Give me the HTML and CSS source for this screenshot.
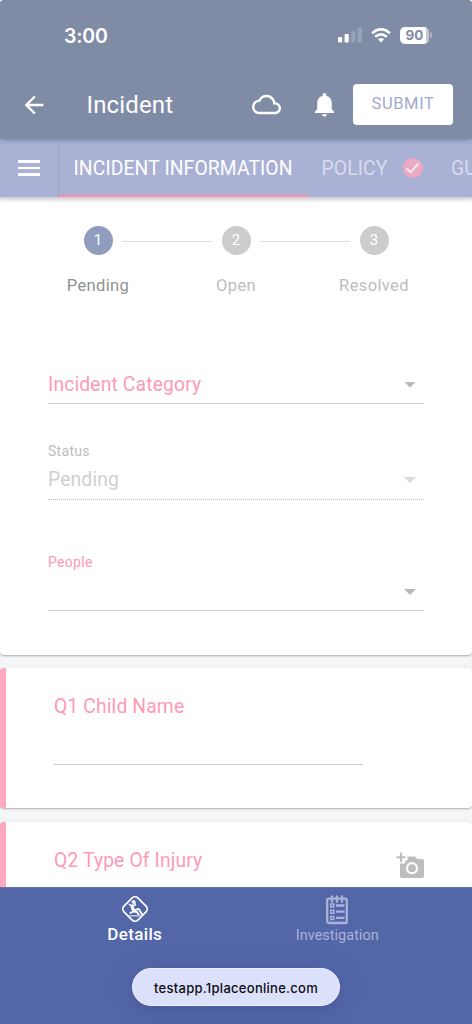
FILE: index.html
```html
<!DOCTYPE html>
<html lang="en">
<head>
<meta charset="utf-8">
<title>Incident</title>
<link rel="stylesheet" href="styles.css">
</head>
<body>
<div class="app">
  <header class="header">
    <div class="status-bar">
      <span class="time">3:00</span>
      <div class="indicators">
        <svg class="signal" width="24" height="16" viewBox="0 0 24 16"><rect x="0" y="10" width="4.2" height="5.5" rx="1.2" fill="#fff"/><rect x="6.6" y="7" width="4.2" height="8.5" rx="1.2" fill="#fff"/><rect x="13.2" y="4" width="4.2" height="11.5" rx="1.2" fill="#99a2b8"/><rect x="19.6" y="0.5" width="4.2" height="15" rx="1.2" fill="#99a2b8"/></svg>
        <svg class="wifi" width="20" height="15" viewBox="0 0 20 15" fill="none" stroke="#fff" stroke-width="2.6"><path d="M1 5.2Q10-2.7 19 5.2M4.2 8.8Q10 3.8 15.8 8.8"/><path d="M7 11.3Q10 8.8 13 11.3L10 14.4Z" fill="#fff" stroke="none"/></svg>
        <div class="battery"><span class="battery-level">90</span><span class="battery-tip"></span></div>
      </div>
    </div>
    <div class="toolbar">
      <svg class="back" width="28" height="28" viewBox="0 0 24 24" fill="#fff"><path d="M20 11H7.83l5.59-5.59L12 4l-8 8 8 8 1.41-1.41L7.83 13H20z"/></svg>
      <h1 class="title">Incident</h1>
      <svg class="cloud" width="29" height="29" viewBox="0 0 24 24" fill="#fff"><path d="M19.35 10.04C18.67 6.59 15.64 4 12 4 9.11 4 6.6 5.64 5.35 8.04 2.34 8.36 0 10.91 0 14c0 3.31 2.69 6 6 6h13c2.76 0 5-2.24 5-5 0-2.64-2.05-4.78-4.65-4.96zM19 18H6c-2.21 0-4-1.79-4-4s1.79-4 4-4h.71C7.37 7.69 9.48 6 12 6c3.04 0 5.5 2.46 5.5 5.5v.5H19c1.66 0 3 1.34 3 3s-1.34 3-3 3z"/></svg>
      <svg class="bell" width="29" height="29" viewBox="0 0 24 24" fill="#fff"><path d="M12 22c1.1 0 2-.9 2-2h-4c0 1.1.89 2 2 2zm6-6v-5c0-3.07-1.64-5.64-4.5-6.32V4c0-.83-.67-1.5-1.5-1.5s-1.5.67-1.5 1.5v.68C7.63 5.36 6 7.92 6 11v5l-2 2v1h16v-1l-2-2z"/></svg>
      <button class="submit">SUBMIT</button>
    </div>
  </header>
  <nav class="tabs">
    <div class="menu"><span class="menu-icon"><i class="bar"></i><i class="bar"></i><i class="bar"></i></span></div>
    <div class="tab tab-active">INCIDENT INFORMATION</div>
    <div class="tab tab-policy">POLICY
      <svg width="20" height="20" viewBox="0 0 20 20"><circle cx="10" cy="10" r="10" fill="#eca9c2"/><path d="M3.6 10.4 7.7 14.2 15.5 5.5" fill="none" stroke="#eceaf3" stroke-width="2"/></svg>
    </div>
    <div class="tab tab-next">GU</div>
  </nav>
  <main class="content">
    <section class="card main-card">
      <div class="stepper">
        <div class="step step-current"><span class="dot">1</span><span class="step-label">Pending</span></div>
        <div class="line"></div>
        <div class="step"><span class="dot">2</span><span class="step-label">Open</span></div>
        <div class="line"></div>
        <div class="step"><span class="dot">3</span><span class="step-label">Resolved</span></div>
      </div>
      <div class="field category"><span class="value required">Incident Category</span><i class="caret"></i></div>
      <div class="label status-label">Status</div>
      <div class="field disabled"><span class="value">Pending</span><i class="caret"></i></div>
      <div class="people">
        <div class="label required">People</div>
        <div class="field people-field"><i class="caret"></i></div>
      </div>
    </section>
    <section class="card question">
      <div class="question-title required">Q1 Child Name</div>
      <div class="answer"></div>
    </section>
    <section class="card question question-last">
      <div class="question-title required">Q2 Type Of Injury</div>
      <svg class="camera" width="29" height="27" viewBox="0 0 29 27"><path d="M4.5 11.5H9V8.5H11.5V4.500H19l2.500 2.500H26q2 0 2 2v15q0 2-2 2H6q-2 0-2-2V11.500Z" fill="#bdbdbd"/><path d="M5 .5v9.500M.5 5.200h9" stroke="#bdbdbd" stroke-width="2"/><circle cx="16" cy="16.200" r="5" fill="#bdbdbd" stroke="#fff" stroke-width="2.200"/></svg>
    </section>
  </main>
  <footer class="bottom">
    <div class="bottom-tabs">
      <div class="bottom-tab details">
        <svg width="30" height="30" viewBox="0 0 30 30" fill="none" stroke="#fff"><rect x="5.200" y="5.200" width="19.600" height="19.600" rx="4" transform="rotate(45 15 15)" stroke-width="1.700"/><circle cx="13.300" cy="8" r="1.700" fill="#fff" stroke="none"/><path d="M12 12 13.500 16.500" stroke-width="3.200" stroke-linecap="round"/><path d="M12.500 11.500 15.500 11 14.500 7M11.500 12 9.300 10.300" stroke-width="1.400" stroke-linecap="round" stroke-linejoin="round"/><path d="M14 16.500 18.500 14.800 22 20.300M13.500 17.500 17 18 19 21.300M13 17.500 10.500 19" stroke-width="1.800" stroke-linecap="round" stroke-linejoin="round"/><path d="M9 21.800H20.500" stroke="#bfc6e1" stroke-width="1.500"/></svg>
        <span>Details</span>
      </div>
      <div class="bottom-tab investigation">
        <svg width="24" height="30" viewBox="0 0 24 30" fill="none" stroke="#a9b3d7"><rect x="2.200" y="3.700" width="19.600" height="24.300" rx="1.500" stroke-width="2.300"/><path d="M7 1.500v5M12 1.500v5M17 1.500v5" stroke-width="2.400" stroke-linecap="round"/><path d="M11 10.500h8.500M11 16.700h8.500M11 22.900h8.500" stroke-width="2.300"/><path d="M5.800 9h3v3h-3zM5.800 15.200h3v3h-3zM5.800 21.400h3v3h-3z" stroke-width="1.500"/></svg>
        <span>Investigation</span>
      </div>
    </div>
    <div class="address">testapp.1placeonline.com</div>
  </footer>
</div>
</body>
</html>
```
FILE: styles.css
```css
* { box-sizing: border-box; }
body { margin: 0; background: #fff; font-family: Roboto, sans-serif; }
.app { display: flex; flex-direction: column; width: 472px; height: 1024px; overflow: hidden; }
.header { position: relative; z-index: 3; flex: none; height: 139px; background: #808ca6; border-radius: 4px 4px 0 0; box-shadow: 0 1px 5px rgba(70, 80, 110, .5); }
.status-bar { display: flex; justify-content: space-between; align-items: center; height: 70px; padding: 0 40px 0 64px; }
.time { padding-top: 1px; font: 600 19.5px/24px Inter, sans-serif; letter-spacing: -.2px; color: #fff; }
.indicators { display: flex; align-items: center; gap: 9px; }
.battery { display: flex; align-items: center; gap: 1px; }
.battery-level { width: 29px; height: 17px; border-radius: 5px; background: linear-gradient(90deg, #fff 90%, #c5cad6 90%); color: #808ca6; font: 700 13.5px/17px Inter, sans-serif; text-align: center; }
.battery-tip { width: 2px; height: 6px; border-radius: 0 2px 2px 0; background: #b0b7c8; }
.toolbar { display: flex; align-items: center; height: 69px; padding: 0 19px 0 20px; }
.title { flex: 1; margin: 0 0 0 38.5px; font-size: 24px; font-weight: 400; letter-spacing: .15px; color: #fff; }
.cloud { margin-right: 29px; }
.bell { margin-right: 14px; }
.submit { width: 100px; height: 41px; padding: 0 0 2px; border: 0; border-radius: 4px; background: #fff; color: #a0aacb; font: 400 16.5px Roboto, sans-serif; letter-spacing: .6px; }
.tabs { position: relative; z-index: 2; flex: none; display: flex; height: 58px; background: #a9b1d5; color: #fff; font-size: 19.3px; letter-spacing: .12px; white-space: nowrap; box-shadow: 0 2px 5px rgba(0, 0, 0, .25); }
.menu { flex: none; display: flex; align-items: center; justify-content: center; width: 59px; border-right: 1px solid #9ca5c9; }
.menu-icon { display: flex; flex-direction: column; gap: 4px; width: 22px; }
.bar { height: 2.5px; background: #fff; }
.tab { flex: none; display: flex; align-items: center; color: #d8dcec; }
.tab-active { width: 249px; padding: 2px 0 0 14.5px; border-bottom: 2px solid #ff8fae; color: #fff; }
.tab-policy { gap: 15.5px; width: 143px; padding-left: 13.5px; }
.content { flex: 1; min-height: 0; overflow: hidden; background: #f5f6f8; }
.card { background: #fff; border-radius: 4px; box-shadow: 0 1px 2px rgba(0, 0, 0, .28), 0 0 6px rgba(0, 0, 0, .04); }
.main-card { height: 457.5px; padding: 29px 48px 0; }
.stepper { display: flex; height: 145px; padding: 0 2px; }
.step { flex: none; display: flex; flex-direction: column; align-items: center; gap: 21px; width: 96px; margin: 0 -24px; color: #bdbdbd; }
.step:first-child { margin-left: 0; }
.step:last-child { margin-right: 0; }
.dot { width: 29px; height: 29px; border-radius: 50%; background: #ccc; color: #fff; font-size: 15px; line-height: 29px; text-align: center; }
.step-current .dot { background: #909dbe; }
.step-label { font-size: 16.5px; line-height: 20px; letter-spacing: .38px; }
.step-current .step-label { color: #919191; }
.line { flex: 1; height: 1px; margin-top: 15px; background: #dcdcdc; }
.field { display: flex; align-items: center; justify-content: space-between; height: 38px; padding-right: 8px; border-bottom: 1px solid #cecece; color: #d0d0d0; }
.category { margin-top: -5px; }
.category .value { padding-top: 1px; }
.value { font-size: 19.3px; line-height: 24px; letter-spacing: .15px; }
.required { color: #ff9ab5; }
.caret { width: 12px; height: 6px; background: #b8b8b8; clip-path: polygon(0 0, 100% 0, 50% 100%); }
.label { font-size: 14px; line-height: 18px; letter-spacing: .3px; }
.status-label { margin-top: 38px; color: #bdbdbd; }
.disabled { height: 40px; border-bottom: 1px dotted #c0c0c0; }
.disabled .value { padding-top: 1px; }
.disabled .caret { margin-top: 1px; background: #dbdbdb; }
.people { margin: 32px -48px 0; padding: 20px 48px 0; border-top: 1px solid #fcfcfc; }
.people-field { justify-content: flex-end; height: 40px; }
.people-field .caret { margin-top: 3px; }
.question { height: 140px; margin-top: 13.5px; padding: 27px 48px 0; border-left: 6px solid #ffa8bf; }
.question-title { font-size: 19.3px; line-height: 24px; letter-spacing: .14px; }
.answer { width: 309px; height: 46px; border-bottom: 1px solid #cecece; }
.question-last { display: flex; justify-content: space-between; align-items: flex-start; }
.camera { margin: 3px -1px 0 0; }
.bottom { position: relative; flex: none; display: flex; flex-direction: column; align-items: center; height: 137px; background: #5366a8; border-top: 1px solid #6574b0; overflow: hidden; }
.bottom-tabs { display: flex; width: 405px; height: 80px; }
.bottom-tab { flex: 1; display: flex; flex-direction: column; align-items: center; padding-top: 6px; }
.details { color: #fff; font-size: 17px; font-weight: 500; letter-spacing: .35px; line-height: 20px; }
.investigation { padding-top: 7px; color: #a9b3d7; font-size: 14.5px; letter-spacing: 0; line-height: 21px; }
.address { width: 208px; height: 38px; border: 1px solid #edf0ff; border-radius: 19px; background: #dbe0fb; color: #0d0e13; box-shadow: 0 3px 26px rgba(60, 70, 120, .22), 0 6px 10px rgba(60, 70, 120, .14); font: 500 13px/38px Inter, sans-serif; letter-spacing: .28px; text-align: center; white-space: nowrap; }
```
